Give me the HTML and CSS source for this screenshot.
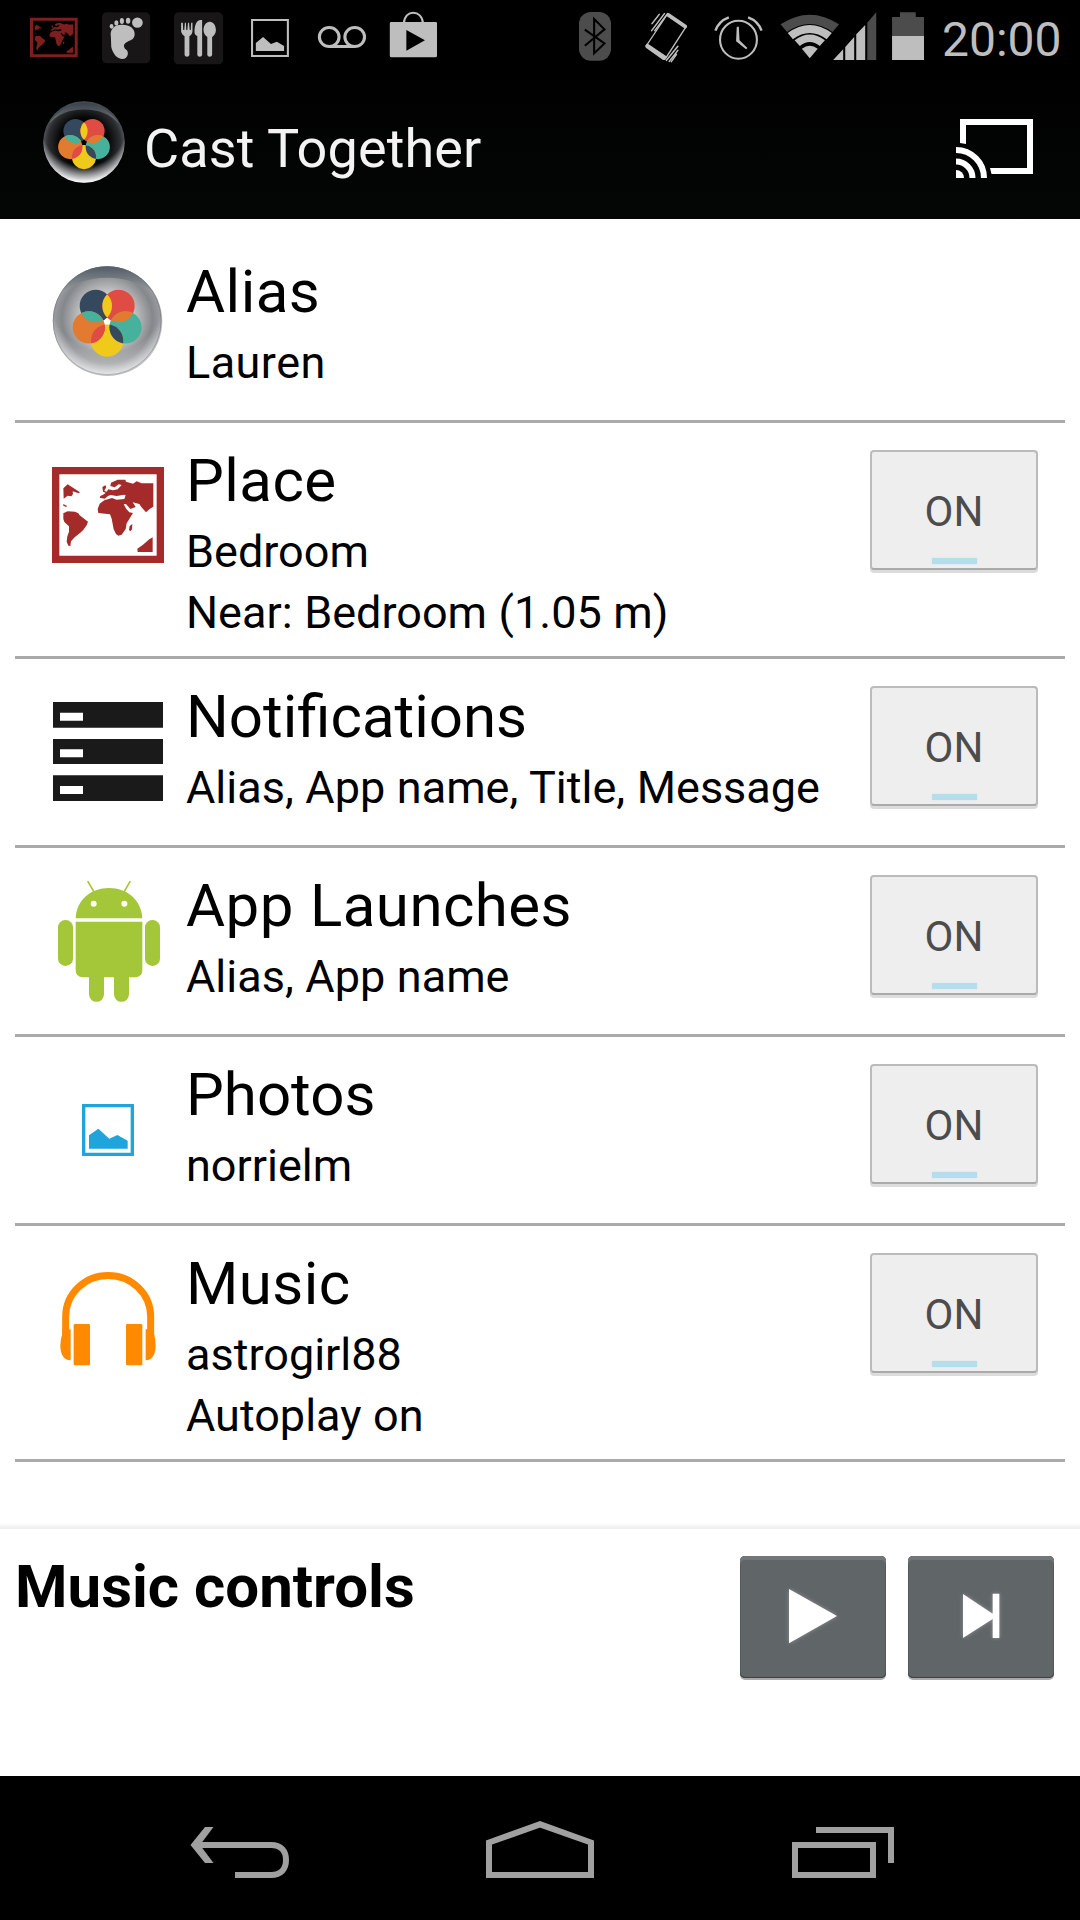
FILE: index.html
```
<!DOCTYPE html>
<html lang="en">
<head>
  <meta charset="utf-8">
  <title>Cast Together</title>
  <link rel="stylesheet" href="styles.css">
</head>
<body>
  <!-- shared shapes -->
  <svg class="defs" width="0" height="0">
    <defs>
      <clipPath id="clipBlue"><circle cx="-34" cy="-44" r="48.5"/></clipPath>
      <clipPath id="clipRed"><circle cx="34" cy="-44" r="48.5"/></clipPath>
      <clipPath id="clipTeal"><circle cx="55" cy="20" r="48.5"/></clipPath>
      <clipPath id="clipYellow"><circle cx="0" cy="60" r="48.5"/></clipPath>
      <clipPath id="clipOrange"><circle cx="-55" cy="20" r="48.5"/></clipPath>
      <radialGradient id="discLight" cx="50%" cy="48%" r="52%">
        <stop offset="0" stop-color="#f4f4f4"/>
        <stop offset=".4" stop-color="#d2d2d3"/>
        <stop offset=".8" stop-color="#85888b"/>
        <stop offset="1" stop-color="#a0a2a7"/>
      </radialGradient>
      <radialGradient id="discDark" cx="50%" cy="50%" r="50%">
        <stop offset="0" stop-color="#000"/>
        <stop offset=".6" stop-color="#060606"/>
        <stop offset=".88" stop-color="#2b2d30"/>
        <stop offset="1" stop-color="#4d5258"/>
      </radialGradient>
      <radialGradient id="discBottom" cx="50%" cy="28%" r="72%">
        <stop offset=".72" stop-color="#fff" stop-opacity="0"/>
        <stop offset="1" stop-color="#fff"/>
      </radialGradient>
      <linearGradient id="crescent" x1="0" y1="0" x2="0" y2="1">
        <stop offset="0" stop-color="#525d67"/>
        <stop offset="1" stop-color="#a5a5a7"/>
      </linearGradient>
      <linearGradient id="crescentDark" x1="0" y1="0" x2="0" y2="1">
        <stop offset="0" stop-color="#3a444d"/>
        <stop offset="1" stop-color="#77787c"/>
      </linearGradient>
    </defs>
    <symbol id="flower" viewBox="-164 -164 328 328">
      <circle cx="-34" cy="-44" r="48.5" fill="#34495e"/>
      <circle cx="34" cy="-44" r="48.5" fill="#e04c44"/>
      <circle cx="55" cy="20" r="48.5" fill="#46b29d"/>
      <circle cx="0" cy="60" r="48.5" fill="#efca1a"/>
      <circle cx="-55" cy="20" r="48.5" fill="#e27a2f"/>
      <circle cx="34" cy="-44" r="48.5" fill="#efca1a" clip-path="url(#clipBlue)"/>
      <circle cx="55" cy="20" r="48.5" fill="#e27a2f" clip-path="url(#clipRed)"/>
      <circle cx="0" cy="60" r="48.5" fill="#34495e" clip-path="url(#clipTeal)"/>
      <circle cx="-55" cy="20" r="48.5" fill="#e04c44" clip-path="url(#clipYellow)"/>
      <circle cx="-34" cy="-44" r="48.5" fill="#46b29d" clip-path="url(#clipOrange)"/>
    </symbol>
    <symbol id="map" viewBox="156 681 336 288">
      <path fill="none" stroke="currentColor" stroke-width="22" d="M167 692H481V958H167Z"/>
      <g fill="currentColor">
        <path d="M190 745L203 733L212 739L240 757L236 760L218 754L219 762L214 769L203 767L191 776Z"/>
        <path d="M190 792L201 798L199 801L190 797Z"/>
        <path d="M190 820L203 814L225 815L235 820L239 826L264 845L260 856L249 871L240 879L224 892L213 904L211 918L205 917L200 905L202 889L207 875V859L193 846L190 837Z"/>
        <path d="M301 768L299 773L314 776L324 768L332 765L350 768L372 764L377 766L373 777L350 779L336 774L313 781L299 791L293 807L295 819L330 823L335 836L341 868L348 882L355 887L365 884L377 867L380 850L399 819L388 817L379 807L371 793L378 792L391 807L407 801L398 787L418 792L424 801L438 817L449 807L460 800V730H425L410 724L399 731L378 725L376 719H353L333 728L331 738L344 742L356 733L365 735L353 748L339 751L325 748L320 755L313 752L319 741L316 736L307 741L309 755L317 758L312 763Z"/>
        <path d="M397 852L389 858L387 870L391 874L396 868Z"/>
        <path d="M413 936L412 926L428 915L448 898L458 892V936Z"/>
      </g>
    </symbol>
  </svg>

  <div class="status-bar">
    <div class="status-icons">
      <svg class="cell" viewBox="52.3 0 209 225" preserveAspectRatio="none">
        <use class="map-dim" href="#map" x="87" y="51" width="139" height="123"/>
      </svg>
      <svg class="cell" viewBox="261.4 0 209 225" preserveAspectRatio="none">
        <rect x="296" y="37" width="140" height="153" rx="14" fill="#181617"/>
        <path fill="#bebebe" d="M322 110C318 88 332 74 353 74C376 73 391 85 391 101C391 118 381 119 370 125C356 132 358 143 368 150C375 158 371 177 356 177C340 177 327 160 323 140Z"/>
        <circle cx="399" cy="68" r="15.500" fill="#bebebe"/>
        <ellipse cx="372" cy="62" rx="6.500" ry="9" fill="#bebebe"/>
        <ellipse cx="354" cy="63" rx="6" ry="9" fill="#bebebe"/>
        <ellipse cx="338" cy="69" rx="6" ry="8" fill="#bebebe"/>
        <ellipse cx="324" cy="79" rx="5.500" ry="7" fill="#bebebe"/>
      </svg>
      <svg class="cell" viewBox="470.500 0 209 225" preserveAspectRatio="none">
        <rect x="505" y="37" width="143" height="156" rx="14" fill="#181617"/>
        <g fill="#bebebe">
          <path d="M526 68H531L532 90H535L537 68H540L541 90H544L546 68H549L551 90H554L555 68H559V94C558 103 554 107 550 109V165Q549 170 543 170T536 165V109C531 106 527 101 526 94Z"/>
          <path d="M565 98C564 78 570 62 581 60H587V165Q586 170 580 170T573 165V108C568 106 566 103 565 98Z"/>
          <path d="M609 65C620 65 627 77 627 90C627 100 622 107 616 111V165Q615 170 609 170T602 165V111C596 107 591 100 591 90C591 77 598 65 609 65Z"/>
        </g>
      </svg>
      <svg class="cell" viewBox="679.600 0 209 225" preserveAspectRatio="none">
        <path fill="none" stroke="#bebebe" stroke-width="6" d="M732 60H836V168H732Z"/>
        <path fill="#bebebe" d="M743 129L764 111L787 132L804 125L825 138V153H743Z"/>
      </svg>
      <svg class="cell" viewBox="888.600 0 209 225" preserveAspectRatio="none">
        <g fill="none" stroke="#bebebe" stroke-width="9">
          <ellipse cx="956" cy="111" rx="28.500" ry="28.500"/>
          <ellipse cx="1030" cy="111" rx="28.500" ry="28.500"/>
          <path d="M956 139.500H1030"/>
        </g>
      </svg>
      <svg class="cell" viewBox="1097.700 0 209 225" preserveAspectRatio="none">
        <path fill="none" stroke="#bebebe" stroke-width="6" d="M1173 69C1174 49 1186 38 1200 38S1227 49 1228 69"/>
        <path fill="#bebebe" fill-rule="evenodd" d="M1136 66H1265Q1269 66 1269 70V167Q1269 172 1264 172H1137Q1132 172 1132 167V70Q1132 66 1136 66ZM1180 90V152L1234 121Z"/>
      </svg>
    </div>
    <div class="status-icons system">
      <svg class="cell" viewBox="55 0 209 225" preserveAspectRatio="none">
        <rect x="113" y="36" width="93" height="146" rx="34" ry="36" fill="#4c4c4c"/>
        <path fill="none" stroke="#000" stroke-width="6" d="M130 89L187 130L157 160V57L187 88L130 137"/>
      </svg>
      <svg class="cell" viewBox="264 0 209 225" preserveAspectRatio="none">
        <path fill="none" stroke="#bebebe" stroke-width="4" stroke-linejoin="round" d="M370 42L424 80L364 176L308 138Z"/>
        <path fill="#bebebe" d="M369 40L374 39L426 76L427 82L421 86L367 48Z M311 130L369 170L363 180L357 180L307 143L305 137Z"/>
        <path fill="none" stroke="#bebebe" stroke-width="4.500" stroke-linecap="round" d="M325 71L346 43M324 92L361 41M333 92L370 41M400 139L367 181M400 151L375 184M396 163L381 185"/>
      </svg>
      <svg class="cell" viewBox="473 0 209 225" preserveAspectRatio="none">
        <ellipse cx="576" cy="119" rx="53.500" ry="57" fill="none" stroke="#bebebe" stroke-width="6"/>
        <path fill="#bebebe" d="M571 80H577L579 121L602 144L598 148L569 124Z"/>
        <path fill="none" stroke="#bebebe" stroke-width="7" d="M509 92Q519 63 548 52M643 92Q633 63 604 52"/>
      </svg>
      <!-- wifi and signal share one cell, their shapes touch -->
      <svg class="network" viewBox="682 0 319.500 225" preserveAspectRatio="none">
        <path fill="#4c4c4c" d="M698 73Q783 15 868 73L849 96Q783 48 717 96Z"/>
        <path fill="#bebebe" d="M719 99Q783 51 847 99L832 118Q783 80 734 118Z"/>
        <path fill="#bebebe" d="M739 121Q783 86 827 121L812 138Q783 114 754 138Z"/>
        <path fill="#bebebe" d="M760 146Q783 129 806 146L783 175Z"/>
        <path fill="#bebebe" d="M851 180L880 148V180ZM886 180V141L912 111V180ZM918 180V103L944 75V180Z"/>
        <path fill="#4c4c4c" d="M950 180V68L976 37V180Z"/>
      </svg>
      <svg class="battery" viewBox="1001.500 0 131 225" preserveAspectRatio="none">
        <path fill="#4c4c4c" d="M1022 51H1045V37H1091V51H1115V108H1022Z"/>
        <path fill="#bebebe" d="M1022 108H1115V180H1022Z"/>
      </svg>
      <span class="clock">20:00</span>
    </div>
  </div>

  <div class="action-bar">
    <svg class="logo" viewBox="-164 -164 328 328">
      <circle r="163" fill="url(#discDark)"/>
      <path fill="url(#crescentDark)" d="M-140 -72A160 160 0 0 1 140 -72Q92 -130 0 -130T-140 -72Z"/>
      <circle r="163" fill="url(#discBottom)"/>
      <use href="#flower" x="-164" y="-164" width="328" height="328"/>
    </svg>
    <h1>Cast Together</h1>
    <svg class="cast" viewBox="0 0 77 59">
      <path fill="#fff" d="M4 24V0H77V55H35.500L34 49H71V6H10V25Z"/>
      <path fill="none" stroke="#fff" stroke-width="6" d="M0 31A28 28 0 0 1 28 59M0 42.500A16.500 16.500 0 0 1 16.500 59"/>
      <path fill="#fff" d="M0 51A8 8 0 0 1 8 59H0Z"/>
    </svg>
  </div>

  <div class="list">
    <div class="row">
      <svg class="icon" viewBox="45 -18 513 558">
        <circle cx="323" cy="244" r="164" fill="#888" opacity=".5"/>
        <g transform="translate(321.500 242)">
          <circle r="163" fill="url(#discLight)"/>
          <path fill="url(#crescent)" d="M-145 -72A161 161 0 0 1 145 -72Q92 -129 0 -129T-145 -72Z"/>
          <circle r="163" fill="url(#discBottom)" opacity=".75"/>
          <circle r="162" fill="none" stroke="#60686f" stroke-width="2" opacity=".6"/>
          <circle r="13" cy="2" fill="#fff"/>
          <use href="#flower" x="-164" y="-164" width="328" height="328"/>
        </g>
      </svg>
      <div class="text">
        <h2 class="spaced">Alias</h2>
        <p class="spaced">Lauren</p>
      </div>
    </div>

    <div class="row">
      <svg class="icon" viewBox="45 549 513 558">
        <use class="map-red" href="#map" x="156" y="681" width="336" height="288"/>
      </svg>
      <div class="text">
        <h2 class="spaced">Place</h2>
        <p>Bedroom</p>
        <p>Near: Bedroom (1.05 m)</p>
      </div>
      <button class="toggle">ON</button>
    </div>

    <div class="row">
      <svg class="icon" viewBox="45 -63 513 558">
        <path fill="#1a1a1a" d="M159 66H489V143H159ZM159 177H489V252H159ZM159 286H489V363H159Z"/>
        <path fill="#fff" d="M180 98H249V122H180ZM180 208H249V232H180ZM180 318H249V342H180Z"/>
      </svg>
      <div class="text">
        <h2>Notifications</h2>
        <p>Alias, App name, Title, Message</p>
      </div>
      <button class="toggle">ON</button>
    </div>

    <div class="row">
      <svg class="icon" viewBox="45 504 513 558">
        <g fill="#a4c639">
          <path d="M227 715C229 660 272 624 327 624S424 660 427 715Z"/>
          <path d="M227 725H427V870Q427 892 405 892H387V943A22 22 0 0 1 342 943V892H312V943A22 22 0 0 1 267 943V892H249Q227 892 227 870Z"/>
          <rect x="174" y="720" width="45" height="138" rx="22"/>
          <rect x="435" y="720" width="45" height="138" rx="22"/>
        </g>
        <path stroke="#a4c639" stroke-width="5" stroke-linecap="round" d="M264 605L281 634M390 605L373 634"/>
        <circle cx="281" cy="671" r="9" fill="#fff"/>
        <circle cx="373" cy="671" r="9" fill="#fff"/>
      </svg>
      <div class="text">
        <h2 class="spaced">App Launches</h2>
        <p>Alias, App name</p>
      </div>
      <button class="toggle">ON</button>
    </div>

    <div class="row">
      <svg class="icon" viewBox="45 -69 513 558">
        <path fill="none" stroke="#1fa5dc" stroke-width="10" d="M251 137H397V283H251Z"/>
        <path fill="#1fa5dc" d="M267 226L295 206L328 236L352 225L383 242V266H267Z"/>
      </svg>
      <div class="text">
        <h2>Photos</h2>
        <p>norrielm</p>
      </div>
      <button class="toggle">ON</button>
    </div>

    <div class="row">
      <svg class="icon" viewBox="45 498 513 558">
        <path fill="none" stroke="#ff8a00" stroke-width="21" d="M197 830V770A127 123 0 0 1 452 770V830"/>
        <path fill="#ff8a00" d="M187 808H212V901C190 901 181 880 181 857Q181 836 187 822ZM462 808H437V901C458 901 467 880 467 857Q467 836 462 822Z"/>
        <rect x="221" y="792" width="49" height="124" rx="4" fill="#ff8a00"/>
        <rect x="378" y="792" width="49" height="124" rx="4" fill="#ff8a00"/>
      </svg>
      <div class="text">
        <h2 class="spaced">Music</h2>
        <p>astrogirl88</p>
        <p>Autoplay on</p>
      </div>
      <button class="toggle">ON</button>
    </div>
  </div>

  <div class="controls-shadow"></div>
  <div class="controls">
    <h3>Music controls</h3>
    <button class="player">
      <svg viewBox="120 168 438 366"><path d="M267 267L411 348L267 430Z"/></svg>
    </button>
    <button class="player">
      <svg viewBox="624 168 438 366"><path d="M789 282L878 341V281H898V414H878V357L789 414Z"/></svg>
    </button>
  </div>

  <div class="nav-bar">
    <svg viewBox="87 6 302 144">
      <path fill="none" stroke="#a0a0a0" stroke-width="6" d="M198 75H271C281 75 286 81 286 90S281 105 271 105H235"/>
      <path fill="#a0a0a0" d="M190.500 75L205 57H213.500L200 75L213.500 93H205Z"/>
    </svg>
    <svg viewBox="389 6 302 144">
      <path fill="none" stroke="#a0a0a0" stroke-width="6" d="M489 72.500L540 54.300L591 72.500V105H489Z"/>
    </svg>
    <svg viewBox="691 6 302 144">
      <path fill="none" stroke="#a0a0a0" stroke-width="6" d="M795 75H873V105H795ZM816 60H891V93"/>
    </svg>
  </div>
</body>
</html>
```
FILE: styles.css
```
body {
  display: flex;
  flex-direction: column;
  width: 1080px;
  height: 1920px;
  margin: 0;
  background: #fff;
  color: #000;
  font-family: Roboto, sans-serif;
  overflow: hidden;
}

h1, h2, h3, p {
  margin: 0;
  font-weight: 400;
  white-space: nowrap;
}

svg {
  display: block;
  flex: none;
}

.defs {
  position: absolute;
}

/* status bar */
.status-bar {
  display: flex;
  justify-content: space-between;
  height: 75px;
  padding: 0 18px;
  background: #000;
}

.status-icons {
  display: flex;
}

.cell {
  width: 72px;
  height: 75px;
}

.network {
  width: 110px;
  height: 75px;
}

.battery {
  width: 45px;
  height: 75px;
}

.clock {
  width: 121px;
  margin-left: 12px;
  margin-right: -1px;
  color: #bebebe;
  font-size: 48px;
  line-height: 80px;
}

.map-dim {
  color: #7d1f1f;
}

.map-red {
  color: #a52a2a;
}

/* action bar */
.action-bar {
  display: flex;
  align-items: flex-start;
  height: 144px;
  background: linear-gradient(#000, #040606);
}

.logo {
  width: 82px;
  height: 82px;
  margin: 26px 19px 0 43px;
}

.action-bar h1 {
  flex: 1;
  margin-top: 43px;
  color: #f3f3f3;
  font-size: 54px;
  letter-spacing: 0.1px;
  line-height: 62px;
}

.cast {
  width: 77px;
  height: 59px;
  margin: 44px 47px 0 0;
}

/* settings list */
.list {
  padding: 15px 15px 0;
}

.row {
  display: flex;
  align-items: flex-start;
  min-height: 186px;
  border-bottom: 3px solid #aaa;
}

.icon {
  width: 171px;
  height: 186px;
}

.text {
  flex: 1;
  padding: 23px 0 4px;
}

.text h2 {
  margin-bottom: 5px;
  font-size: 60px;
  line-height: 70px;
}

.text p {
  font-size: 45px;
  line-height: 61px;
  word-spacing: 0.4px;
}

.text p + p {
  margin-bottom: 9px;
}

.text .spaced {
  letter-spacing: 0.45px;
  word-spacing: 0.8px;
}

.toggle {
  display: flex;
  flex-direction: column;
  align-items: center;
  box-sizing: border-box;
  width: 168px;
  height: 120px;
  margin: 27px 27px 0 0;
  padding: 35px 0 0;
  border: 2px solid #bbb;
  border-bottom-color: #aaa;
  border-radius: 4px;
  background: #eee;
  box-shadow: 0 3px 0 #dcdcdc;
  color: #4c4c4c;
  font-family: Roboto, sans-serif;
  font-size: 42px;
  line-height: 49px;
}

.toggle::after {
  content: '';
  width: 45px;
  height: 6px;
  margin-top: 22px;
  background: #b5deed;
  box-shadow: 0 0 2px #cfe6ee;
}

/* music controls */
.controls-shadow {
  height: 6px;
  margin-top: auto;
  background: linear-gradient(#fff, #ececec);
}

.controls {
  display: flex;
  align-items: flex-start;
  gap: 22px;
  box-sizing: border-box;
  height: 247px;
  padding: 27px 26px 0 15px;
}

.controls h3 {
  flex: 1;
  margin-top: -4px;
  font-size: 60px;
  font-weight: 700;
  line-height: 70px;
}

.player {
  width: 146px;
  height: 122px;
  padding: 0;
  border: none;
  border-radius: 5px;
  background: #606568;
  box-shadow: inset 0 4px 0 #73777a, inset 0 -1px 0 #3c4042, inset 0 0 0 1px #55595c, 0 2px 0 #aaa;
}

.player svg {
  width: 146px;
  height: 122px;
  fill: #fff;
  filter: drop-shadow(0 0 2px rgba(255, 255, 255, 0.3));
}

/* navigation bar */
.nav-bar {
  display: flex;
  justify-content: center;
  height: 144px;
  background: #000;
}

.nav-bar svg {
  width: 302px;
  height: 144px;
}
```
